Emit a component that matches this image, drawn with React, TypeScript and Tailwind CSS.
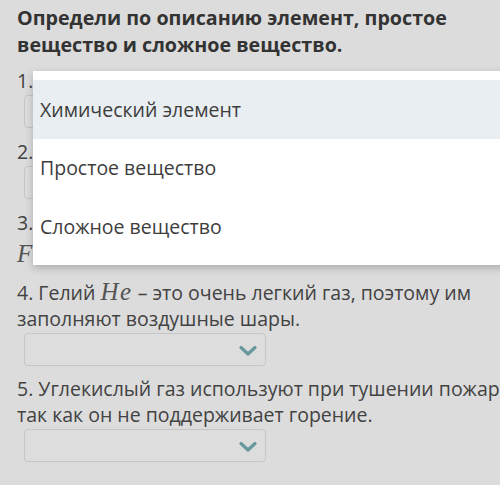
import React from 'react';

const Chevron = () => (
  <svg width="18" height="12" viewBox="0 0 18 12" className="absolute right-[8px] top-[11px]">
    <path d="M2 2.5 L9 9 L16 2.5" fill="none" stroke="#6a979d" strokeWidth="3.2" strokeLinecap="round" strokeLinejoin="round" />
  </svg>
);

const SelectBox = () => (
  <div className="relative mt-[1px] h-[33px] w-[242px] ml-[7px] rounded-[4px] border border-[#c6c6c6] bg-[#dddddd]">
    <Chevron />
  </div>
);

const options = ['Химический элемент', 'Простое вещество', 'Сложное вещество'];

const qText = 'text-[19.5px] leading-[26px] text-[#424242]';
const mathText = "font-['Liberation_Serif',serif] text-[25px] leading-none italic tracking-[1.5px] text-[#555555]";

const App = () => {
  return (
    <div className="relative h-[485px] w-[500px] overflow-hidden bg-[#dcdcdc] font-['Open_Sans',sans-serif]">
      <div className="w-[535px] pl-[17px] pt-[4px]">
        <h1 className="mb-[10px] text-[19.7px] font-bold leading-[27px] text-[#333333]">
          Определи по описанию элемент, простое вещество и сложное вещество.
        </h1>

        <div className={`mb-[11px] ${qText}`}>
          <div>1. Вещество</div>
          <SelectBox />
        </div>

        <div className={`mb-[11px] ${qText}`}>
          <div>2. Вещество</div>
          <SelectBox />
        </div>

        <div className={`mb-[9px] ${qText}`}>
          <div>3. Вещество</div>
          <div className="flex h-[34px] items-center gap-2">
            <span className={mathText}>F</span>
          </div>
        </div>

        <div className={`mb-[10px] ${qText}`}>
          <div>
            4. Гелий <span className={mathText}>He</span> – это очень легкий газ, поэтому им заполняют
            воздушные шары.
          </div>
          <SelectBox />
        </div>

        <div className={`mb-[11px] ${qText}`}>
          <div>5. Углекислый газ используют при тушении пожаров, так как он не поддерживает горение.</div>
          <SelectBox />
        </div>
      </div>

      {/* open dropdown menu */}
      <div className="absolute left-[33px] top-[71px] w-[500px] bg-white py-[9px] shadow-[0_3px_8px_rgba(0,0,0,0.22)]">
        {options.map((opt, i) => (
          <div
            key={opt}
            className={`flex h-[58.5px] items-center px-[7px] text-[19.5px] text-[#3d3d3d] ${
              i === 0 ? 'bg-[#e8eef1]' : ''
            }`}
          >
            {opt}
          </div>
        ))}
      </div>
    </div>
  );
};

export default App;
